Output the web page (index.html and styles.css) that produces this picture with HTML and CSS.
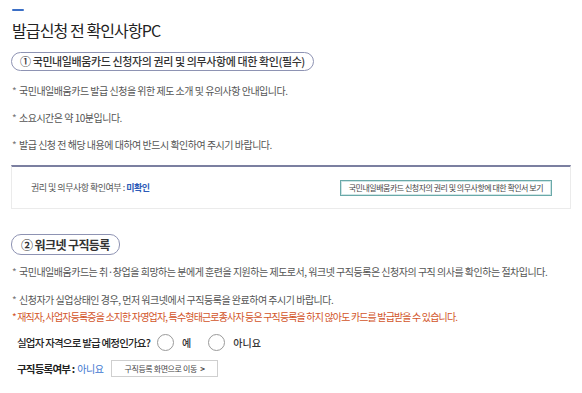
FILE: index.html
```html
<!DOCTYPE html>
<html>
<head>
	<meta charset="utf-8">
	<title>발급신청 전 확인사항</title>
	<link rel="stylesheet" href="styles.css">
</head>
<body>
	<div class="page">
		<div class="dash"></div>
		<h1 class="title">발급신청 전 확인사항PC</h1>

		<div class="pill">① 국민내일배움카드 신청자의 권리 및 의무사항에 대한 확인(필수)</div>
		<ul class="bullets first">
			<li>국민내일배움카드 발급 신청을 위한 제도 소개 및 유의사항 안내입니다.</li>
			<li>소요시간은 약 10분입니다.</li>
			<li>발급 신청 전 해당 내용에 대하여 반드시 확인하여 주시기 바랍니다.</li>
		</ul>

		<div class="check-box">
			<span class="check-label">권리 및 의무사항 확인여부 : <b class="blue">미확인</b></span>
			<a class="btn-teal" href="#">국민내일배움카드 신청자의 권리 및 의무사항에 대한 확인서 보기</a>
		</div>

		<div class="pill pill2">② 워크넷 구직등록</div>
		<ul class="bullets second">
			<li>국민내일배움카드는 취·창업을 희망하는 분에게 훈련을 지원하는 제도로서, 워크넷 구직등록은 신청자의 구직 의사를 확인하는 절차입니다.</li>
			<li>신청자가 실업상태인 경우, 먼저 워크넷에서 구직등록을 완료하여 주시기 바랍니다.</li>
		</ul>
		<p class="note">* 재직자, 사업자등록증을 소지한 자영업자, 특수형태근로종사자 등은 구직등록을 하지 않아도 카드를 발급받을 수 있습니다.</p>

		<div class="question">
			<span class="q-text">실업자 자격으로 발급 예정인가요?</span>
			<label class="radio"><span class="circle"></span>예</label>
			<label class="radio"><span class="circle"></span>아니요</label>
		</div>

		<div class="status">
			<span class="s-label">구직등록여부 :</span>
			<span class="s-value">아니요</span>
			<a class="btn-gray" href="#">구직등록 화면으로 이동 <span class="arrow">&gt;</span></a>
		</div>
	</div>
</body>
</html>
```

FILE: styles.css
```css
body {
	margin: 0;
	background: #ffffff;
	font-family: "Noto Sans CJK KR", "Noto Sans", sans-serif;
	color: #333;
}

.page {
	padding: 9px 11px 0 11px;
}

.dash {
	width: 12px;
	height: 2px;
	margin-left: 1px;
	background-color: #3b6fc6;
	border-radius: 1px;
}

.title {
	margin: 9px 0 0 1px;
	font-size: 16px;
	font-weight: 400;
	letter-spacing: -0.9px;
	line-height: 20px;
	color: #222;
}

.pill {
	display: inline-block;
	margin-top: 12px;
	padding: 0 8px;
	height: 17px;
	line-height: 17px;
	border: 1px solid #8e93b3;
	border-radius: 10px;
	font-size: 11px;
	font-weight: 500;
	letter-spacing: -0.4px;
	color: #333;
}

.pill2 {
	margin-top: 25px;
	height: 19px;
	line-height: 19px;
	font-size: 12px;
	font-weight: 700;
	padding: 0 9px;
	letter-spacing: -0.6px;
}

.bullets {
	list-style: none;
	margin: 0;
	padding: 0;
}

.bullets li {
	position: relative;
	padding-left: 8px;
	font-size: 10px;
	letter-spacing: -0.5px;
	color: #555;
	line-height: 14px;
}

.bullets li:before {
	content: "*";
	position: absolute;
	left: 1px;
	top: 0;
	color: #777;
}

.first {
	margin-top: 13px;
}

.first li {
	margin-bottom: 13px;
}

.second {
	margin-top: 10px;
}

.second li {
	margin-bottom: 14px;
}

.second li:last-child {
	margin-bottom: 0;
}

.check-box {
	display: flex;
	align-items: center;
	justify-content: space-between;
	margin-top: 5px;
	height: 41px;
	padding: 0 18px 0 19px;
	border-top: 2px solid #7b7fa0;
	border-left: 1px solid #ebebeb;
	border-right: 1px solid #ebebeb;
	border-bottom: 1px solid #ebebeb;
}

.check-label {
	font-size: 9px;
	letter-spacing: -0.5px;
	color: #555;
}

.blue {
	color: #2d5bb8;
	font-weight: 700;
}

.btn-teal {
	display: inline-block;
	height: 14px;
	line-height: 14px;
	padding: 0 8px;
	border: 1px solid #6aa9a9;
	box-shadow: inset 0 0 0 1px #cfe5e5;
	font-size: 8px;
	letter-spacing: -0.5px;
	color: #444;
	text-decoration: none;
}

.note {
	margin: 3px 0 0 1px;
	font-size: 10px;
	letter-spacing: -0.85px;
	line-height: 14px;
	color: #d2552a;
}

.question {
	display: flex;
	align-items: center;
	margin-top: 8px;
	padding-left: 6px;
	height: 20px;
}

.q-text {
	font-size: 10.5px;
	font-weight: 500;
	letter-spacing: -0.8px;
	color: #222;
	margin-right: 7px;
}

.radio {
	display: flex;
	align-items: center;
	font-size: 10px;
	font-weight: 500;
	color: #333;
	margin-right: 17px;
}

.circle {
	display: inline-block;
	width: 15px;
	height: 15px;
	border: 1px solid #9a9a9a;
	border-radius: 50%;
	margin-right: 8px;
}

.status {
	display: flex;
	align-items: center;
	margin-top: 8px;
	padding-left: 6px;
}

.s-label {
	font-size: 10.5px;
	font-weight: 700;
	letter-spacing: -0.8px;
	color: #222;
}

.s-value {
	font-size: 10px;
	letter-spacing: -0.5px;
	color: #3d76d0;
	margin-left: 3px;
	margin-right: 8px;
}

.btn-gray {
	display: inline-block;
	height: 15px;
	line-height: 15px;
	padding: 0 12px;
	border: 1px solid #cfcfcf;
	font-size: 8px;
	letter-spacing: -0.4px;
	color: #444;
	text-decoration: none;
}

.arrow {
	margin-left: 2px;
	font-weight: 700;
}
```
